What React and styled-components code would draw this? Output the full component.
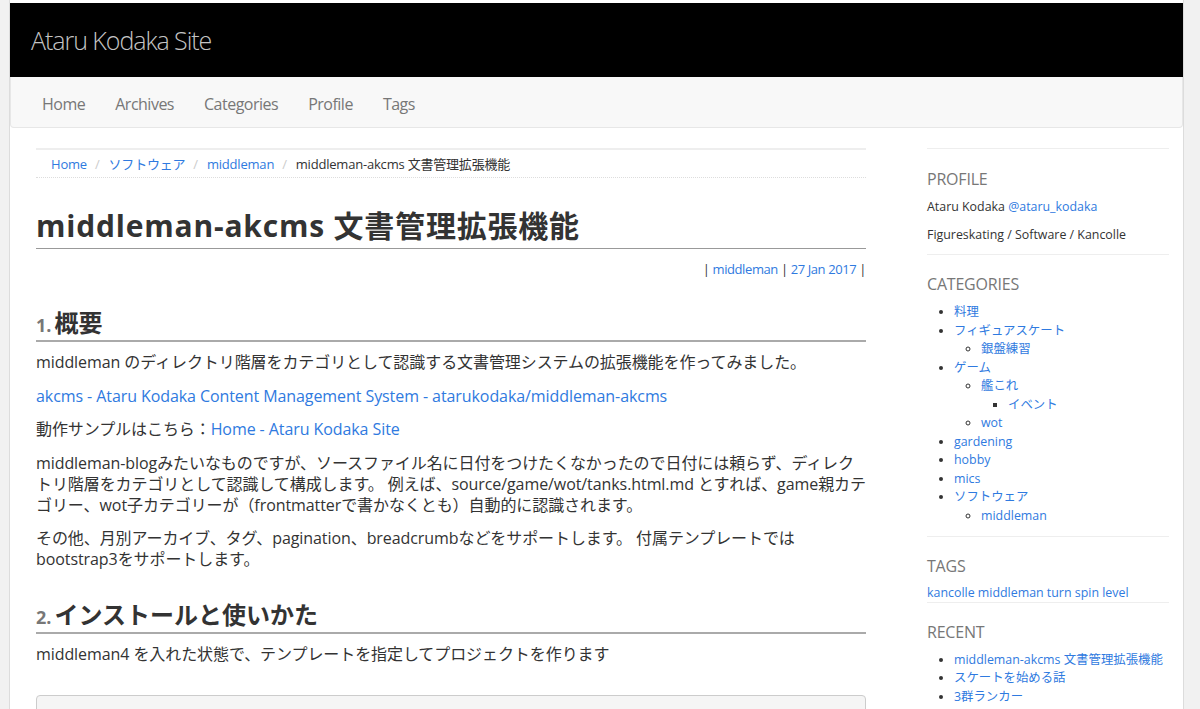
import React from "react";
import styled, { createGlobalStyle } from "styled-components";

const GlobalStyle = createGlobalStyle`
  html, body { margin: 0; padding: 0; }
  body {
    background: #f1f1f1;
    font-family: "Open Sans", "Noto Sans CJK JP", sans-serif;
    color: #333;
  }
  a { color: #2f7ae0; text-decoration: none; }
`;

const Page = styled.div`
  width: 1175px;
  margin-left: 9px;
  border-left: 1px solid #dcdcdc;
  border-right: 1px solid #dcdcdc;
  background: #fff;
  min-height: 100vh;
  padding-top: 3px;
  box-sizing: border-box;
`;

const Header = styled.header`
  height: 74px;
  background: #000;
  display: flex;
  align-items: center;
  padding-left: 21px;
`;

const SiteTitle = styled.div`
  font-size: 25px;
  font-weight: 300;
  color: #c4c4c4;
  letter-spacing: -1.05px;
`;

const NavBar = styled.nav`
  height: 51px;
  background: #f8f8f8;
  border: 1px solid #e7e7e7;
  border-top: none;
  border-radius: 0 0 4px 4px;
  display: flex;
  align-items: center;
  padding: 3px 0 0 16px;
  box-sizing: border-box;
`;

const NavItem = styled.a`
  && { color: #777; }
  font-size: 16px;
  letter-spacing: -0.5px;
  padding: 0 15px;
`;

const Body = styled.div`
  display: flex;
  align-items: flex-start;
  padding: 20px 16px 0 26px;
`;

const Main = styled.main`
  width: 830px;
  flex: none;
`;

const Breadcrumb = styled.ol`
  list-style: none;
  margin: 0;
  padding: 0 15px;
  height: 30px;
  box-sizing: border-box;
  border-top: 2px solid #eee;
  border-bottom: 1px dotted #ddd;
  display: flex;
  align-items: center;
  font-size: 13px;
  letter-spacing: -0.2px;
`;

const Crumb = styled.li`
  color: #333;
  & + &::before {
    content: "/";
    color: #ccc;
    padding: 0 9px 0 8px;
  }
`;

const Title = styled.h1`
  margin: 30px 0 0;
  font-size: 30px;
  line-height: 36px;
  font-weight: 700;
  padding-bottom: 4px;
  border-bottom: 1px solid #999;
  letter-spacing: 0.8px;
`;

const Meta = styled.div`
  margin-top: 11px;
  text-align: right;
  font-size: 13px;
  line-height: 18px;
  letter-spacing: -0.4px;
`;

const SectionHeading = styled.h2`
  margin: 30px 0 10px;
  font-size: 24px;
  line-height: 29px;
  font-weight: 700;
  padding-bottom: 0;
  border-bottom: 2px solid #aaa;
`;

const Num = styled.span`
  color: #777;
  font-size: 18px;
  margin-right: 3px;
`;

const Para = styled.p`
  margin: 0 0 12.5px;
  font-size: 16px;
  line-height: 21px;
  letter-spacing: -0.08px;
`;

const Pre = styled.pre`
  margin: 30px 0 0;
  padding: 11px 9px 9px;
  background: #f5f5f5;
  border: 1px solid #ccc;
  border-radius: 4px;
  font-family: "Liberation Mono", monospace;
  font-size: 13px;
  line-height: 18px;
  height: 60px;
`;

const Sidebar = styled.aside`
  width: 242px;
  margin-left: 61px;
  flex: none;
  border-top: 1px solid #eee;
  padding-top: 1px;
  font-size: 12.4px;
  line-height: 18.55px;
`;

const Widget = styled.section`
  border-bottom: 1px solid #eee;
  padding-bottom: ${(p) => (p.$tight ? "1px" : "10px")};
  &:last-child { border-bottom: none; }
`;

const WidgetTitle = styled.h3`
  margin: 19px 0 9px;
  font-size: 16px;
  line-height: 20px;
  font-weight: 400;
  color: #777;
  letter-spacing: -0.2px;
  text-transform: uppercase;
`;

const WidgetText = styled.p`
  margin: 0 0 10px;
  line-height: 18px;
  &:last-child { margin-bottom: 0; }
`;

const TagLine = styled.div`
  line-height: 16px;
`;

const List = styled.ul`
  margin: 0;
  padding-left: 27px;
`;

const Item = styled.li``;

const categories = [
  { name: "料理" },
  { name: "フィギュアスケート", children: [{ name: "銀盤練習" }] },
  {
    name: "ゲーム",
    children: [
      { name: "艦これ", children: [{ name: "イベント" }] },
      { name: "wot" },
    ],
  },
  { name: "gardening" },
  { name: "hobby" },
  { name: "mics" },
  { name: "ソフトウェア", children: [{ name: "middleman" }] },
];

function Tree({ items }) {
  return (
    <List>
      {items.map((c) => (
        <Item key={c.name}>
          <a href="#">{c.name}</a>
          {c.children && <Tree items={c.children} />}
        </Item>
      ))}
    </List>
  );
}

export default function App() {
  return (
    <>
      <GlobalStyle />
      <Page>
        <Header>
          <SiteTitle>Ataru Kodaka Site</SiteTitle>
        </Header>
        <NavBar>
          {["Home", "Archives", "Categories", "Profile", "Tags"].map((n) => (
            <NavItem key={n} href="#">{n}</NavItem>
          ))}
        </NavBar>
        <Body>
          <Main>
            <Breadcrumb>
              <Crumb><a href="#">Home</a></Crumb>
              <Crumb><a href="#">ソフトウェア</a></Crumb>
              <Crumb><a href="#">middleman</a></Crumb>
              <Crumb>middleman-akcms 文書管理拡張機能</Crumb>
            </Breadcrumb>
            <Title>middleman-akcms 文書管理拡張機能</Title>
            <Meta>
              | <a href="#">middleman</a> | <a href="#">27 Jan 2017</a> |
            </Meta>
            <SectionHeading><Num>1.</Num>概要</SectionHeading>
            <Para>middleman のディレクトリ階層をカテゴリとして認識する文書管理システムの拡張機能を作ってみました。</Para>
            <Para><a href="#">akcms - Ataru Kodaka Content Management System - atarukodaka/middleman-akcms</a></Para>
            <Para>動作サンプルはこちら：<a href="#">Home - Ataru Kodaka Site</a></Para>
            <Para>middleman-blogみたいなものですが、ソースファイル名に日付をつけたくなかったので日付には頼らず、ディレクトリ階層をカテゴリとして認識して構成します。 例えば、source/game/wot/tanks.html.md とすれば、game親カテゴリー、wot子カテゴリーが（frontmatterで書かなくとも）自動的に認識されます。</Para>
            <Para>その他、月別アーカイブ、タグ、pagination、breadcrumbなどをサポートします。 付属テンプレートでは bootstrap3をサポートします。</Para>
            <SectionHeading><Num>2.</Num>インストールと使いかた</SectionHeading>
            <Para>middleman4 を入れた状態で、テンプレートを指定してプロジェクトを作ります</Para>
            <Pre>% middleman init my_project -T atarukodaka/middleman-akcms</Pre>
          </Main>
          <Sidebar>
            <Widget>
              <WidgetTitle>Profile</WidgetTitle>
              <WidgetText>Ataru Kodaka <a href="#">@ataru_kodaka</a></WidgetText>
              <WidgetText>Figureskating / Software / Kancolle</WidgetText>
            </Widget>
            <Widget>
              <WidgetTitle>Categories</WidgetTitle>
              <Tree items={categories} />
            </Widget>
            <Widget $tight>
              <WidgetTitle>Tags</WidgetTitle>
              <TagLine>
                <a href="#">kancolle</a> <a href="#">middleman</a> <a href="#">turn</a>{" "}
                <a href="#">spin</a> <a href="#">level</a>
              </TagLine>
            </Widget>
            <Widget>
              <WidgetTitle>Recent</WidgetTitle>
              <List>
                <Item><a href="#">middleman-akcms 文書管理拡張機能</a></Item>
                <Item><a href="#">スケートを始める話</a></Item>
                <Item><a href="#">3群ランカー</a></Item>
              </List>
            </Widget>
          </Sidebar>
        </Body>
      </Page>
    </>
  );
}
